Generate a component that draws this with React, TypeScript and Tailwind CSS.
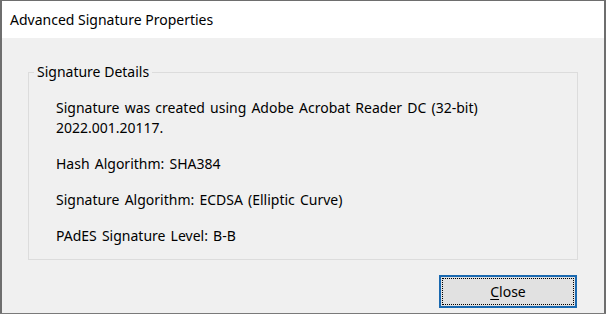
import React from 'react';

const lines = [
  ['Signature was created using Adobe Acrobat Reader DC (32-bit)', '2022.001.20117.'],
  ['Hash Algorithm: SHA384'],
  ['Signature Algorithm: ECDSA (Elliptic Curve)'],
  ['PAdES Signature Level: B-B'],
];

const App: React.FC = () => {
  return (
    <div className="w-[606px] h-[314px] overflow-hidden bg-white">
      <div
        className="h-[313px] flex flex-col bg-[#f0f0f0] border-t border-x-2 border-[#6e6e6e] text-black"
        style={{ fontFamily: '"Noto Sans", "Open Sans", sans-serif' }}
      >
        {/* Title bar */}
        <div className="h-[37px] shrink-0 bg-white flex items-center pl-[8px] text-[14px]">
          Advanced Signature Properties
        </div>

        <div className="flex-1 px-[26px] pt-[24px] flex flex-col">
          <fieldset className="border border-[#dcdcdc] pl-[5px] pb-[13px] pt-[16px]">
            <legend className="px-[3px] text-[14px] leading-[20px]">Signature Details</legend>
            <div className="flex flex-col gap-[16px] pl-[22px] text-[14px] leading-[20px] [word-spacing:1.5px]">
              {lines.map((p, i) => (
                <p key={i}>
                  {p.map((l, j) => (
                    <span key={j} className="block">{l}</span>
                  ))}
                </p>
              ))}
            </div>
          </fieldset>

          <div className="flex justify-end mt-[15px] pr-[1px]">
            <button className="relative w-[138px] h-[33px] bg-[#e1e1e1] border-2 border-[#1a69b0] text-[14px]">
              <span className="absolute inset-[1px] border border-dotted border-black"></span>
              <span className="relative"><span className="underline underline-offset-2">C</span>lose</span>
            </button>
          </div>
        </div>
      </div>
      <div className="h-[1px] bg-[#7a7a7a]"></div>
    </div>
  );
};

export default App;
